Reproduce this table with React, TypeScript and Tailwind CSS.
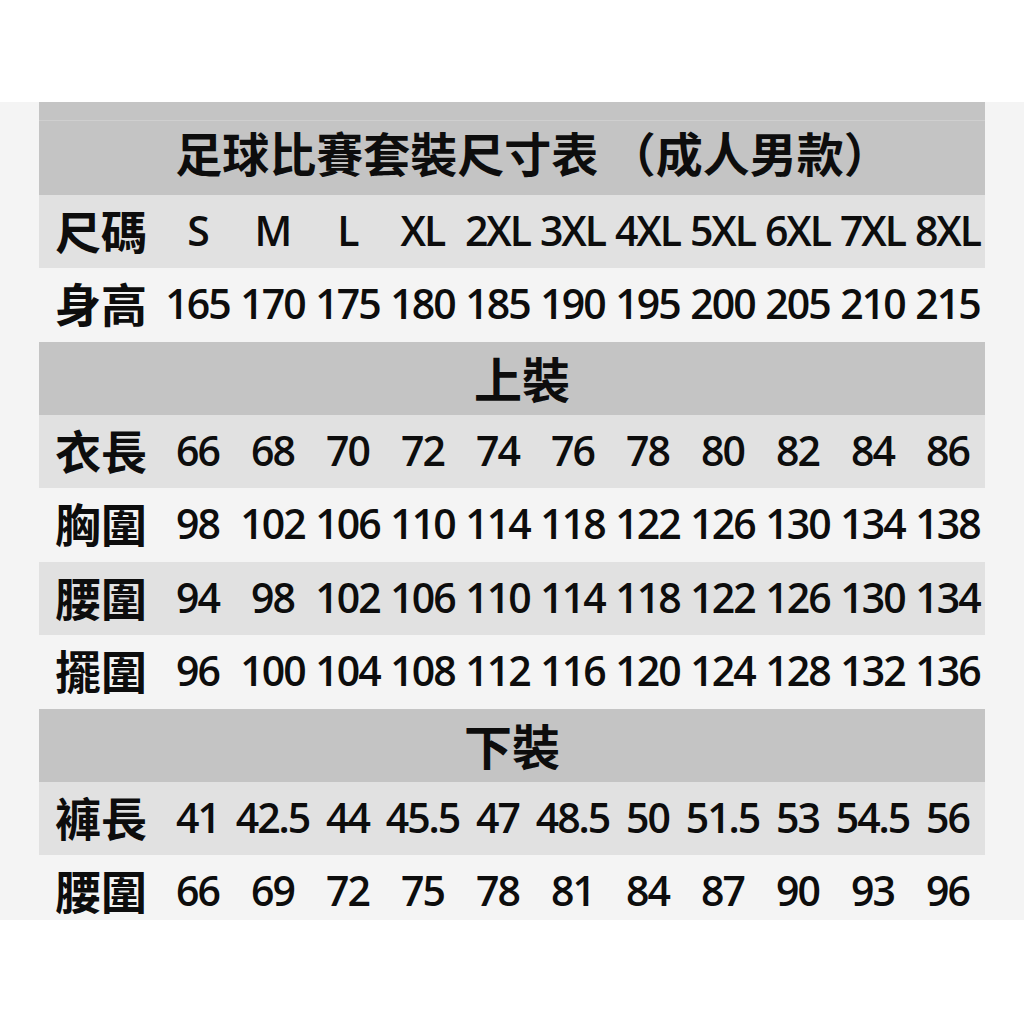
import React from 'react';

const sizes = ['S', 'M', 'L', 'XL', '2XL', '3XL', '4XL', '5XL', '6XL', '7XL', '8XL'];

type Row = { label: string; values: (string | number)[]; bg: string; h: string };

const upper: Row[] = [
  { label: '衣長', values: [66, 68, 70, 72, 74, 76, 78, 80, 82, 84, 86], bg: 'bg-[#e1e1e1]', h: 'h-[73px]' },
  { label: '胸圍', values: [98, 102, 106, 110, 114, 118, 122, 126, 130, 134, 138], bg: 'bg-[#f4f4f4]', h: 'h-[74px]' },
  { label: '腰圍', values: [94, 98, 102, 106, 110, 114, 118, 122, 126, 130, 134], bg: 'bg-[#e1e1e1]', h: 'h-[73px]' },
  { label: '擺圍', values: [96, 100, 104, 108, 112, 116, 120, 124, 128, 132, 136], bg: 'bg-[#f4f4f4]', h: 'h-[74px]' },
];

const lower: Row[] = [
  { label: '褲長', values: ['41', '42.5', '44', '45.5', '47', '48.5', '50', '51.5', '53', '54.5', '56'], bg: 'bg-[#e1e1e1]', h: 'h-[73px]' },
  { label: '腰圍', values: [66, 69, 72, 75, 78, 81, 84, 87, 90, 93, 96], bg: 'bg-[#f4f4f4]', h: 'h-[65px] pt-2' },
];

const cjk = "font-['Noto_Sans_CJK_TC',sans-serif]";
const latin = "font-['Open_Sans','Noto_Sans_CJK_TC',sans-serif]";

const Cell: React.FC<{ children: React.ReactNode }> = ({ children }) => (
  <div className={`flex justify-center whitespace-nowrap pb-[3px] text-[41px] font-semibold tracking-[-2px] leading-none ${latin}`}>
    {children}
  </div>
);

const Label: React.FC<{ children: React.ReactNode }> = ({ children }) => (
  <div className={`pl-4 pb-[6px] text-[46px] font-bold leading-none ${cjk}`}>{children}</div>
);

const DataRow: React.FC<{ row: Row }> = ({ row }) => (
  <div className={`grid grid-cols-[121px_repeat(11,75px)] items-center ${row.bg} ${row.h}`}>
    <Label>{row.label}</Label>
    {row.values.map((v, i) => (
      <Cell key={i}>{v}</Cell>
    ))}
  </div>
);

const SectionRow: React.FC<{ title: string; offset: string }> = ({ title, offset }) => (
  <div className={`h-[73px] flex items-center justify-center bg-[#c4c4c4] pb-[4px] ${offset}`}>
    <span className={`text-[48px] font-bold leading-none ${cjk}`}>{title}</span>
  </div>
);

export default function App() {
  return (
    <div className="w-[1024px] h-[1024px] bg-white flex flex-col text-[#0d0d0d]">
      <div className="h-[102px] shrink-0" />
      <div className="h-[818px] shrink-0 bg-[#f4f4f4] px-[39px]">
        {/* title */}
        <div className="h-[93px] bg-[#c4c4c4] flex flex-col">
          <div className="h-[19px] border-b border-[#cfcfcf]" />
          <div className="flex-1 flex items-center justify-center pb-[14px] pl-[42px]">
            <span className={`text-[47px] font-bold leading-none whitespace-nowrap ${cjk}`}>
              足球比賽套裝尺寸表 （成人男款）
            </span>
          </div>
        </div>

        {/* sizes */}
        <div className="grid grid-cols-[121px_repeat(11,75px)] items-center h-[73px] bg-[#e1e1e1]">
          <Label>尺碼</Label>
          {sizes.map((s) => (
            <Cell key={s}>{s}</Cell>
          ))}
        </div>

        <DataRow
          row={{ label: '身高', values: [165, 170, 175, 180, 185, 190, 195, 200, 205, 210, 215], bg: 'bg-[#f4f4f4]', h: 'h-[74px]' }}
        />

        <SectionRow title="上裝" offset="pl-[20px]" />
        {upper.map((r) => (
          <DataRow key={r.label} row={r} />
        ))}

        <SectionRow title="下裝" offset="" />
        {lower.map((r) => (
          <DataRow key={r.label + '-b'} row={r} />
        ))}
      </div>
      <div className="flex-1" />
    </div>
  );
}
